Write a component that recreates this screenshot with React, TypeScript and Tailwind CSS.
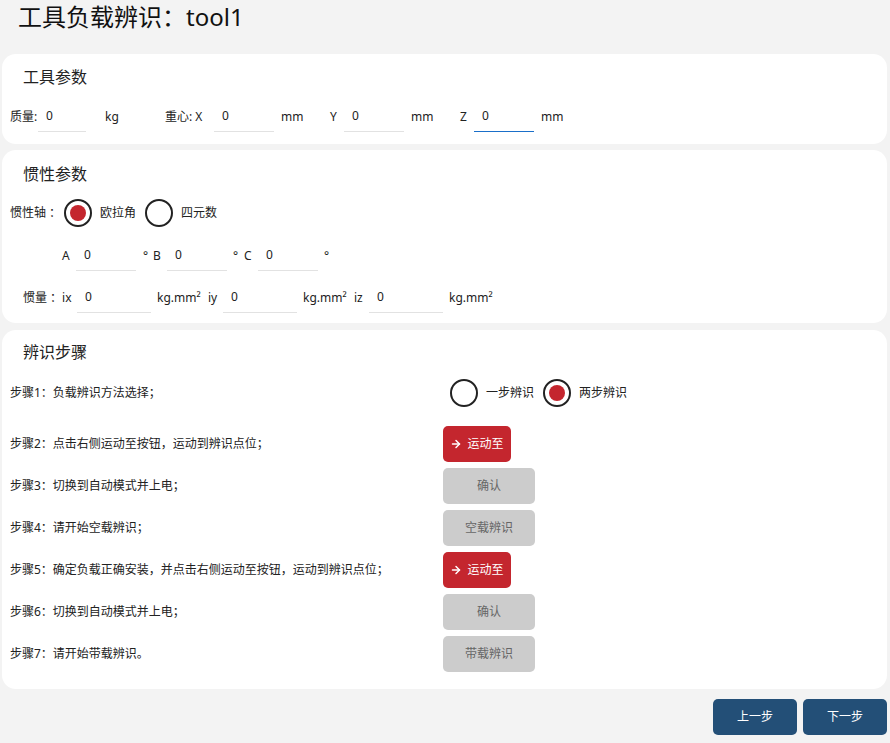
import { ArrowRight } from "lucide-react";

const font = "font-['Noto_Sans','Noto_Sans_CJK_SC',sans-serif]";

function Field({ w, focused = false }: { w: string; focused?: boolean }) {
    return (
        <div
            className={`${w} h-[30px] flex items-center pl-2 border-b ${focused ? "border-[#1a6fc9]" : "border-[#e2e2e2]"}`}
        >
            <span className="text-[12px] leading-none text-[#222] -mt-[1px]">0</span>
        </div>
    );
}

function Radio({ checked, label }: { checked: boolean; label: string }) {
    return (
        <div className="flex items-center gap-2">
            <div className="w-[28px] h-[28px] rounded-full border-2 border-[#222] flex items-center justify-center">
                {checked && <div className="w-[16px] h-[16px] rounded-full bg-[#c4262e]" />}
            </div>
            <span className="text-[12px] text-[#222]">{label}</span>
        </div>
    );
}

function Card({ title, children, className = "" }: { title: string; children: React.ReactNode; className?: string }) {
    return (
        <section className={`bg-white rounded-[14px] ${className}`}>
            <h2 className="h-[22px] pl-[21px] text-[16px] leading-[22px] text-[#222] font-normal">{title}</h2>
            {children}
        </section>
    );
}

function MoveButton() {
    return (
        <button className="h-[36px] w-[68px] rounded-[5px] bg-[#c4262e] text-white text-[12px] flex items-center justify-center gap-[5px]">
            <ArrowRight className="w-[12px] h-[12px]" strokeWidth={3} />
            运动至
        </button>
    );
}

function GrayButton({ label }: { label: string }) {
    return (
        <button className="h-[36px] w-[92px] rounded-[5px] bg-[#cccccc] text-[#666] text-[12px] flex items-center justify-center">
            {label}
        </button>
    );
}

export default function App() {
    const steps: { text: string; action: React.ReactNode }[] = [
        { text: "步骤2：点击右侧运动至按钮，运动到辨识点位；", action: <MoveButton /> },
        { text: "步骤3：切换到自动模式并上电；", action: <GrayButton label="确认" /> },
        { text: "步骤4：请开始空载辨识；", action: <GrayButton label="空载辨识" /> },
        { text: "步骤5：确定负载正确安装，并点击右侧运动至按钮，运动到辨识点位；", action: <MoveButton /> },
        { text: "步骤6：切换到自动模式并上电；", action: <GrayButton label="确认" /> },
        { text: "步骤7：请开始带载辨识。", action: <GrayButton label="带载辨识" /> },
    ];

    return (
        <div className={`${font} w-[890px] h-[743px] bg-[#f3f3f3] text-[#222] pl-[2px] pr-[3px] overflow-hidden`}>
            <h1 className="h-[54px] pl-[16px] text-[24px] leading-[34px] font-normal text-[#111]">工具负载辨识：tool1</h1>

            {/* 工具参数 */}
            <Card title="工具参数" className="h-[90px] pt-[12px]">
                <div className="mt-[14px] pl-[8px] flex items-center text-[12px] h-[30px]">
                    <span className="w-[28px]">质量:</span>
                    <Field w="w-[48px]" />
                    <span className="ml-[19px] w-[60px]">kg</span>
                    <span className="w-[49px]">重心: X</span>
                    <Field w="w-[60px]" />
                    <span className="ml-[7px] w-[49px]">mm</span>
                    <span className="w-[14px]">Y</span>
                    <Field w="w-[60px]" />
                    <span className="ml-[7px] w-[49px]">mm</span>
                    <span className="w-[14px]">Z</span>
                    <Field w="w-[60px]" focused />
                    <span className="ml-[7px]">mm</span>
                </div>
            </Card>

            {/* 惯性参数 */}
            <Card title="惯性参数" className="mt-[6px] h-[173px] pt-[13px]">
                <div className="mt-[14px] pl-[8px] flex items-center h-[28px] text-[12px]">
                    <span className="w-[54px]">惯性轴 ：</span>
                    <Radio checked label="欧拉角" />
                    <div className="ml-[9px]">
                        <Radio checked={false} label="四元数" />
                    </div>
                </div>
                <div className="mt-[14px] pl-[60px] flex items-center h-[30px] text-[12px]">
                    <span className="w-[14px]">A</span>
                    <Field w="w-[60px]" />
                    <span className="ml-[7px] w-[10px]">°</span>
                    <span className="w-[14px]">B</span>
                    <Field w="w-[60px]" />
                    <span className="ml-[6px] w-[11px]">°</span>
                    <span className="w-[14px]">C</span>
                    <Field w="w-[60px]" />
                    <span className="ml-[6px]">°</span>
                </div>
                <div className="mt-[12px] pl-[21px] flex items-center h-[30px] text-[12px]">
                    <span className="w-[54px]">惯量 ：ix</span>
                    <Field w="w-[74px]" />
                    <span className="ml-[6px] w-[51px]">kg.mm²</span>
                    <span className="w-[15px]">iy</span>
                    <Field w="w-[74px]" />
                    <span className="ml-[6px] w-[51px]">kg.mm²</span>
                    <span className="w-[15px]">iz</span>
                    <Field w="w-[74px]" />
                    <span className="ml-[6px]">kg.mm²</span>
                </div>
            </Card>

            {/* 辨识步骤 */}
            <Card title="辨识步骤" className="mt-[7px] h-[359px] pt-[11px]">
                <div className="pl-[8px] text-[12px]">
                    <div className="h-[60px] flex items-center">
                        <span className="w-[433px]">步骤1：负载辨识方法选择；</span>
                        <div className="ml-[7px] flex items-center gap-[9px]">
                            <Radio checked={false} label="一步辨识" />
                            <Radio checked label="两步辨识" />
                        </div>
                    </div>
                    {steps.map((s) => (
                        <div key={s.text} className="h-[42px] flex items-center">
                            <span className="w-[433px]">{s.text}</span>
                            {s.action}
                        </div>
                    ))}
                </div>
            </Card>

            <div className="mt-[10px] flex justify-end gap-[6px]">
                <button className="w-[84px] h-[36px] rounded-[5px] bg-[#234f77] text-white text-[12px]">上一步</button>
                <button className="w-[84px] h-[36px] rounded-[5px] bg-[#234f77] text-white text-[12px]">下一步</button>
            </div>
        </div>
    );
}
